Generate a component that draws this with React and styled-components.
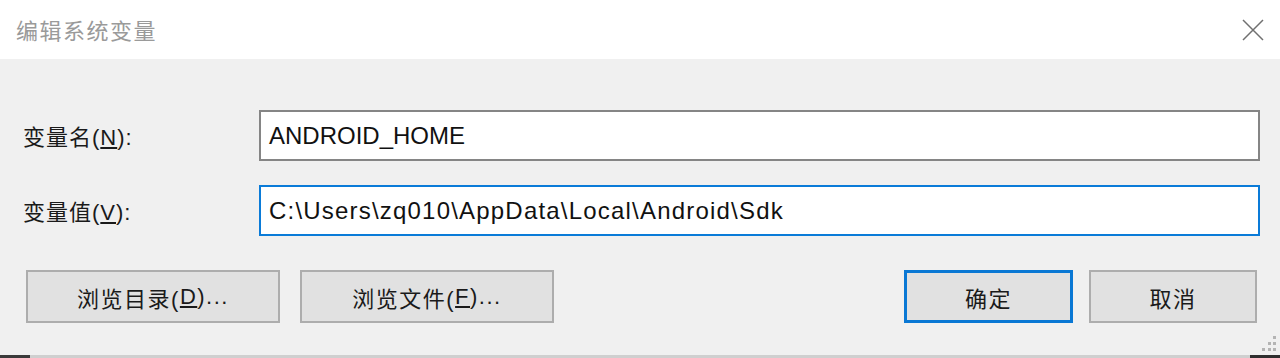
import React from "react";
import styled, { createGlobalStyle } from "styled-components";

const GlobalStyle = createGlobalStyle`
  html, body {
    margin: 0;
    padding: 0;
    background: #f0f0f0;
  }
  body {
    font-family: "Liberation Sans", "Noto Sans CJK SC", sans-serif;
  }
`;

const Window = styled.div`
  position: relative;
  width: 1280px;
  height: 358px;
  display: flex;
  flex-direction: column;
  background: #f0f0f0;
  overflow: hidden;
`;

const TitleBar = styled.div`
  height: 59px;
  flex: none;
  display: flex;
  align-items: center;
  justify-content: space-between;
  padding: 0 16px 0 16px;
  background: #ffffff;
  box-sizing: border-box;
`;

const Title = styled.div`
  font-family: "Noto Sans CJK SC", sans-serif;
  font-size: 22px;
  letter-spacing: 1.5px;
  color: #9a9a9a;
  margin-top: -1px;
`;

const CloseButton = styled.div`
  width: 22px;
  height: 22px;
  display: flex;
  align-items: center;
  justify-content: center;
`;

const Body = styled.div`
  flex: 1;
  display: flex;
  flex-direction: column;
  padding: 51px 20px 0 23px;
`;

const Fields = styled.div`
  display: grid;
  grid-template-columns: 236px 1fr;
  row-gap: 24px;
  align-items: center;
`;

const Label = styled.label`
  font-size: 22px;
  letter-spacing: 1px;
  color: #1a1a1a;
  margin-top: -2px;
`;

const Field = styled.div`
  height: 51px;
  box-sizing: border-box;
  background: #ffffff;
  border: 2px solid ${(p) => (p.$focused ? "#0a7bd8" : "#858585")};
  display: flex;
  align-items: center;
  padding: 0 0 0 8px;
  font-size: 24px;
  letter-spacing: ${(p) => p.$spacing || 0}px;
  color: #111;
  white-space: nowrap;
`;

const ButtonRow = styled.div`
  display: flex;
  align-items: center;
  margin-top: 34px;
  padding-left: 3px;
  padding-right: 3px;
`;

const Group = styled.div`
  display: flex;
  gap: ${(p) => p.$gap}px;
`;

const Spacer = styled.div`
  flex: 1;
`;

const Button = styled.div`
  width: ${(p) => p.$w}px;
  height: 53px;
  box-sizing: border-box;
  background: #e1e1e1;
  border: ${(p) => (p.$primary ? "3px solid #0a78d4" : "2px solid #adadad")};
  display: flex;
  align-items: center;
  justify-content: center;
  font-size: 22px;
  letter-spacing: 1.5px;
  color: #1a1a1a;
`;

const Grip = styled.svg`
  position: absolute;
  right: 3px;
  bottom: 6px;
`;

const BottomEdge = styled.div`
  height: 3px;
  flex: none;
  background: linear-gradient(
    90deg,
    #3a3a3a 0,
    #3a3a3a 30px,
    #cfcfcf 30px,
    #cfcfcf 1250px,
    #2e2e2e 1250px
  );
`;

const App = () => {
  return (
    <>
      <GlobalStyle />
      <Window>
        <TitleBar>
          <Title>编辑系统变量</Title>
          <CloseButton>
            <svg width="22" height="22" viewBox="0 0 22 22">
              <path d="M1 1 L21 21 M21 1 L1 21" stroke="#707070" strokeWidth="1.5" fill="none" />
            </svg>
          </CloseButton>
        </TitleBar>
        <Body>
          <Fields>
            <Label>
              变量名(<u>N</u>):
            </Label>
            <Field>ANDROID_HOME</Field>
            <Label>
              变量值(<u>V</u>):
            </Label>
            <Field $focused $spacing={1.2}>
              C:\Users\zq010\AppData\Local\Android\Sdk
            </Field>
          </Fields>
          <ButtonRow>
            <Group $gap={20}>
              <Button $w={254}>
                浏览目录(<u>D</u>)...
              </Button>
              <Button $w={254}>
                浏览文件(<u>F</u>)...
              </Button>
            </Group>
            <Spacer />
            <Group $gap={16}>
              <Button $w={169} $primary>
                确定
              </Button>
              <Button $w={168}>取消</Button>
            </Group>
          </ButtonRow>
        </Body>
        <BottomEdge />
        <Grip width="16" height="16" viewBox="0 0 16 16">
          <g fill="#b4b4b4">
            <rect x="12" y="0" width="3" height="3" />
            <rect x="7" y="6" width="3" height="3" />
            <rect x="12" y="6" width="3" height="3" />
            <rect x="1" y="12" width="3" height="3" />
            <rect x="7" y="12" width="3" height="3" />
            <rect x="12" y="12" width="3" height="3" />
          </g>
        </Grip>
      </Window>
    </>
  );
};

export default App;
